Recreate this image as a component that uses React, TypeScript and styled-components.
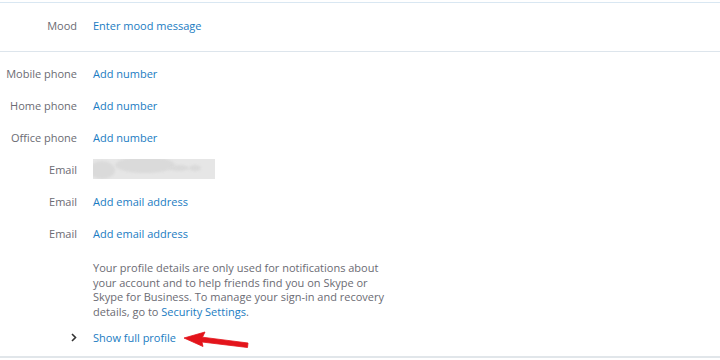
import React from 'react';
import styled, { createGlobalStyle } from 'styled-components';

const GlobalStyle = createGlobalStyle`
  html, body {
    margin: 0;
    padding: 0;
    background: #fff;
  }
  body {
    font-family: 'Open Sans', 'Noto Sans', sans-serif;
    font-size: 11px;
    -webkit-font-smoothing: antialiased;
  }
`;

const Page = styled.div`
  width: 720px;
  height: 360px;
  overflow: hidden;
  padding-top: 2px;
  box-sizing: border-box;
`;

const Section = styled.section<{ $pad?: string; $line?: string }>`
  border-top: 1px solid ${(p) => p.$line || '#d9e7f2'};
  padding: ${(p) => p.$pad || '0'};
`;

const Row = styled.div<{ $h?: number }>`
  display: grid;
  grid-template-columns: 77px 1fr;
  column-gap: 16px;
  align-items: center;
  height: ${(p) => p.$h || 32}px;
`;

const Label = styled.span`
  text-align: right;
  color: #6b6b73;
  white-space: nowrap;
`;

const Link = styled.a`
  color: #1a7cc2;
  text-decoration: none;
  cursor: pointer;
  white-space: nowrap;
`;

const Blurred = styled.div`
  position: relative;
  width: 122px;
  height: 20px;
  background: #e6e6e6;
  overflow: hidden;
`;

const Blob = styled.span<{ $l: number; $t: number; $w: number; $h: number }>`
  position: absolute;
  left: ${(p) => p.$l}px;
  top: ${(p) => p.$t}px;
  width: ${(p) => p.$w}px;
  height: ${(p) => p.$h}px;
  border-radius: 50%;
  background: #dadada;
  filter: blur(1px);
`;

const Note = styled.p`
  margin: 12px 0 0 93px;
  color: #6b6b73;
  line-height: 14.7px;
  white-space: nowrap;
`;

const Toggle = styled.div`
  display: grid;
  grid-template-columns: 77px auto 1fr;
  column-gap: 16px;
  align-items: center;
  height: 24px;
  margin-top: 6px;
  position: relative;
`;

const Chevron = styled.svg`
  justify-self: end;
`;

const Arrow = styled.svg`
  position: absolute;
  left: 182px;
  top: 4px;
`;

const Footer = styled.div`
  margin-top: 6px;
  border-top: 2px solid #e1e6ea;
`;

const rows: { label: string; value?: string; blur?: boolean }[] = [
  { label: 'Mobile phone', value: 'Add number' },
  { label: 'Home phone', value: 'Add number' },
  { label: 'Office phone', value: 'Add number' },
  { label: 'Email', blur: true },
  { label: 'Email', value: 'Add email address' },
  { label: 'Email', value: 'Add email address' },
];

export default function App() {
  return (
    <>
      <GlobalStyle />
      <Page>
        <Section $pad="0 0 3px">
          <Row $h={45}>
            <Label>Mood</Label>
            <Link>Enter mood message</Link>
          </Row>
        </Section>
        <Section $pad="5px 0 0" $line="#dde5ec">
          {rows.map((r, i) => (
            <Row key={i}>
              <Label>{r.label}</Label>
              {r.blur ? (
                <Blurred>
                  <Blob $l={-4} $t={2} $w={26} $h={18} />
                  <Blob $l={22} $t={-2} $w={60} $h={16} />
                  <Blob $l={76} $t={6} $w={20} $h={6} />
                  <Blob $l={96} $t={6} $w={12} $h={6} />
                </Blurred>
              ) : (
                <Link>{r.value}</Link>
              )}
            </Row>
          ))}
          <Note>
            Your profile details are only used for notifications about
            <br />
            your account and to help friends find you on Skype or
            <br />
            Skype for Business. To manage your sign-in and recovery
            <br />
            details, go to <Link>Security Settings</Link>.
          </Note>
          <Toggle>
            <Chevron width="6" height="9" viewBox="0 0 6 9">
              <path d="M1 1 L4.5 4.5 L1 8" fill="none" stroke="#333" strokeWidth="1.6" />
            </Chevron>
            <Link>Show full profile</Link>
            <Arrow width="70" height="20" viewBox="0 0 70 20">
              <path
                d="M2 8 L23 2 L20.5 7.2 L66 13 L65.5 17.5 L20 12 L21 16.5 Z"
                fill="#e3141b"
                strokeLinejoin="round"
                stroke="#e3141b"
                strokeWidth="0.8"
              />
            </Arrow>
          </Toggle>
          <Footer />
        </Section>
      </Page>
    </>
  );
}
